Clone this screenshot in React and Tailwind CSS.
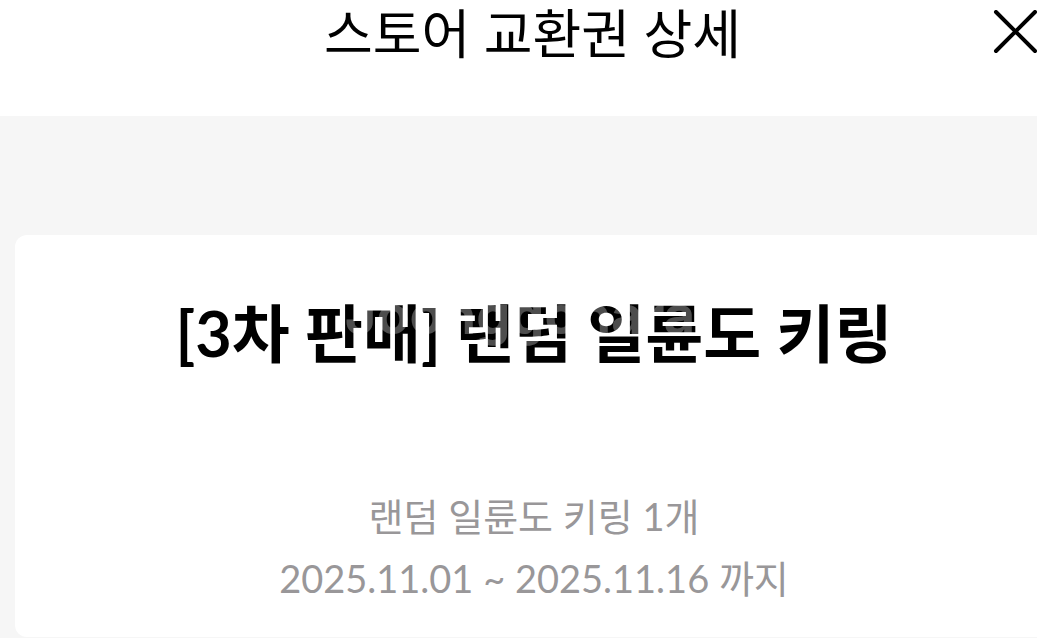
import React from "react";

const CloseIcon = () => (
  <svg
    className="block size-11"
    viewBox="0 0 44 44"
    fill="none"
    stroke="currentColor"
    strokeWidth="4"
    strokeLinecap="round"
    aria-hidden="true"
  >
    <path d="M3 2L42 41M42 2L3 41" />
  </svg>
);

const App = () => {
  return (
    <div className="min-h-screen overflow-hidden bg-[#f6f6f6] font-['Lato','Noto_Sans_CJK_KR',sans-serif] text-black">
      <header className="flex h-29 items-start bg-white">
        <div className="-mr-18 grow text-center">
          <h1 className="text-[53px] leading-17">스토어 교환권 상세</h1>
        </div>
        <button type="button" aria-label="닫기" className="mt-2.5 cursor-pointer">
          <CloseIcon />
        </button>
      </header>

      {/* Voucher card, runs past the right edge */}
      <main className="-mr-4 pt-[119px] pl-[15px]">
        <section className="h-[402px] rounded-xl bg-white pt-15 text-center">
          <div className="relative">
            <h2 className="text-[63px] leading-19 font-bold">
              [3차 판매] 랜덤 일륜도 키링
            </h2>
            {/* Watermark */}
            <span className="pointer-events-none absolute inset-x-0 top-0 pr-7 font-['Inter',sans-serif] text-[54px] leading-10 font-bold text-white/30 select-none">
              Joonggonara
            </span>
          </div>

          <div className="mt-[114px] text-[38px] leading-[62px] text-[#999799]">
            <p>랜덤 일륜도 키링 1개</p>
            <p>2025.11.01 ~ 2025.11.16 까지</p>
          </div>
        </section>
      </main>
    </div>
  );
};

export default App;
